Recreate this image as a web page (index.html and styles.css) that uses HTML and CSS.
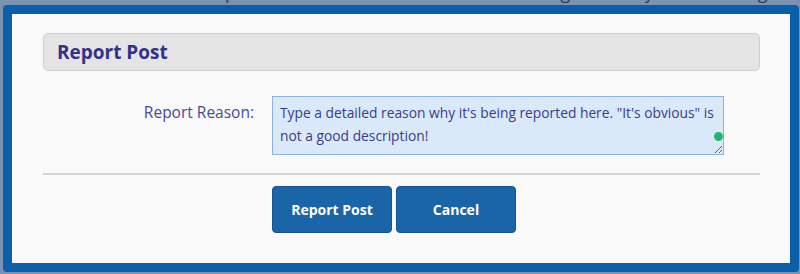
FILE: index.html
```html
<!DOCTYPE html>
<html>
<head>
<meta charset="utf-8">
<link rel="stylesheet" href="styles.css">
</head>
<body>
<p class="behind">penalized actual claims or something there by the whole group of. Do you do what</p>
<div class="modal">
  <div class="modal-header">Report Post</div>
  <div class="form-row">
    <label class="form-label" for="reason">Report Reason:</label>
    <div class="field">
      <textarea id="reason" class="reason">Type a detailed reason why it's being reported here. "It's obvious" is not a good description!</textarea>
      <span class="dot"></span>
    </div>
  </div>
  <div class="divider"></div>
  <div class="actions">
    <button class="btn">Report Post</button>
    <button class="btn">Cancel</button>
  </div>
</div>
</body>
</html>
```
FILE: styles.css
```css
html, body {
  margin: 0;
  padding: 0;
}
body {
  background: #7a93b0;
  height: 274px;
  overflow: hidden;
  font-family: "Open Sans", "Noto Sans", sans-serif;
  position: relative;
}
.behind {
  margin: -19px 0 0 225px;
  font-size: 18px;
  line-height: 22px;
  color: #2d3a4e;
  white-space: nowrap;
  letter-spacing: 1px;
}
.modal {
  position: absolute;
  left: 3px;
  top: 5px;
  width: 796px;
  height: 267px;
  box-sizing: border-box;
  border: 9px solid #0b5ea9;
  border-radius: 4px;
  background: #f9f9f9;
  padding: 19px 30px 0 31px;
}
.modal-header {
  height: 38px;
  box-sizing: border-box;
  border: 1px solid #cfcfcf;
  border-radius: 5px;
  background: #e4e4e4;
  display: flex;
  align-items: center;
  padding-left: 13px;
  font-weight: 700;
  font-size: 19px;
  color: #32328a;
}
.form-row {
  margin-top: 25px;
  display: grid;
  grid-template-columns: 211px 452px;
  column-gap: 18px;
}
.form-label {
  text-align: right;
  font-size: 15.5px;
  color: #4a4a94;
  padding-top: 5px;
  line-height: 22px;
}
.field {
  position: relative;
  height: 59px;
}
.reason {
  display: block;
  width: 452px;
  height: 59px;
  box-sizing: border-box;
  border: 1px solid #8db3e0;
  background: #dae9fa;
  padding: 4px 2px 4px 7px;
  font-family: "Open Sans", "Noto Sans", sans-serif;
  font-size: 13.8px;
  line-height: 23px;
  color: #3a3a8c;
  resize: both;
  overflow: hidden;
  margin: 0;
}
.dot {
  position: absolute;
  right: 1px;
  top: 36px;
  width: 9px;
  height: 9px;
  border-radius: 50%;
  background: #25b56f;
}
.divider {
  margin-top: 18px;
  height: 2px;
  background: #d4d4d4;
}
.actions {
  margin-top: 11px;
  margin-left: 229px;
  display: flex;
  gap: 4px;
}
.btn {
  width: 120px;
  height: 47px;
  box-sizing: border-box;
  border: 1px solid #155494;
  border-radius: 4px;
  background: #1a64a8;
  color: #ffffff;
  font-family: "Open Sans", "Noto Sans", sans-serif;
  font-weight: 700;
  font-size: 14px;
  padding: 0;
}
```
